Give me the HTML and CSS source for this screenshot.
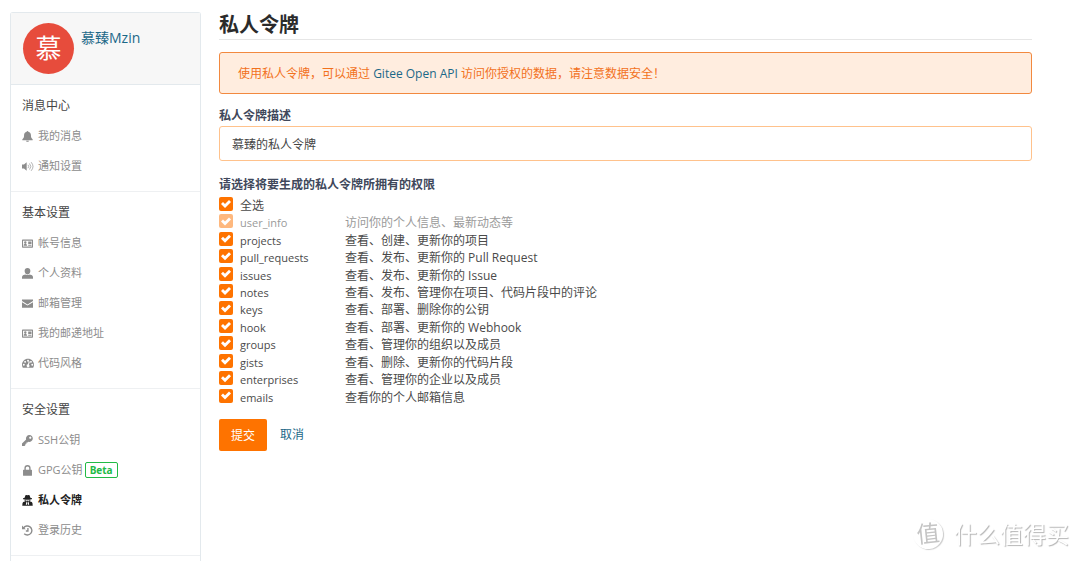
FILE: index.html
```html
<!DOCTYPE html>
<html lang="zh-CN">
<head>
<meta charset="utf-8">
<title>私人令牌</title>
<link rel="stylesheet" href="styles.css">
</head>
<body>
<div class="page">
  <aside class="sidebar">
    <header class="profile">
      <span class="avatar">慕</span>
      <a class="profile-name" href="#">慕臻Mzin</a>
    </header>
    <nav>
      <section class="group">
        <h2 class="group-title">消息中心</h2>
        <a class="item" href="#"><svg class="icon" viewBox="0 0 16 16"><path d="M8 0c.8 0 1.200.5 1.200 1.200C11.700 1.800 13 3.800 13 6.200c0 3 .8 4.600 2.500 5.800V13.300H.5V12C2.200 10.800 3 9.200 3 6.200 3 3.800 4.300 1.800 6.800 1.200 6.800.5 7.200 0 8 0zM6 14h4a2 1.800 0 0 1-4 0z"/></svg>我的消息</a>
        <a class="item" href="#"><svg class="icon icon-wide" viewBox="0 0 18 16"><path d="M0 5h3l4-3.500v13L3 11H0z"/><path class="line" d="M9 5.500q2.200 2.500 0 5M11.300 3.500q3.900 4.500 0 9M13.700 1.500q5.600 6.500 0 13"/></svg>通知设置</a>
      </section>
      <section class="group">
        <h2 class="group-title">基本设置</h2>
        <a class="item" href="#"><svg class="icon" viewBox="0 0 16 16"><path fill-rule="evenodd" d="M1 2h14q1 0 1 1v10q0 1-1 1H1q-1 0-1-1V3q0-1 1-1zM1.500 4v8.500h13V4zM4.800 4.700a1.800 1.800 0 1 1 0 3.600 1.800 1.800 0 0 1 0-3.600zM2.200 11.300q0-2.800 2.600-2.800t2.600 2.800zM9 5h4.800v3.700H9zM9 9.800h4.800v1.500H9z"/></svg>帐号信息</a>
        <a class="item" href="#"><svg class="icon" viewBox="0 0 16 16"><path d="M8 0c2.600 0 4.200 1.900 4.200 4.400S10.200 9.500 8 9.500 3.800 6.900 3.800 4.400 5.400 0 8 0zM4.800 9.300q3.200 1.900 6.400 0 4.500.7 4.800 3.400V15.500H0v-2.800Q.3 10 4.800 9.300z"/></svg>个人资料</a>
        <a class="item" href="#"><svg class="icon" viewBox="0 0 16 16"><path d="M0 2h16v2.300L8 9.300 0 4.300zM0 6l8 5 8-5v8H0z"/></svg>邮箱管理</a>
        <a class="item" href="#"><svg class="icon" viewBox="0 0 16 16"><path fill-rule="evenodd" d="M1 2h14q1 0 1 1v10q0 1-1 1H1q-1 0-1-1V3q0-1 1-1zM1.500 4v8.500h13V4zM4.800 4.700a1.800 1.800 0 1 1 0 3.600 1.800 1.800 0 0 1 0-3.600zM2.200 11.300q0-2.800 2.600-2.800t2.600 2.800zM9 5h4.800v3.700H9zM9 9.800h4.800v1.500H9z"/></svg>我的邮递地址</a>
        <a class="item" href="#"><svg class="icon icon-wide" viewBox="0 0 18 16"><path fill-rule="evenodd" d="M9 1c5 0 9 4 9 9 0 1.500-.4 3-1.200 4.500H1.200C.4 13 0 11.500 0 10c0-5 4-9 9-9zM9 2.500a1.300 1.300 0 1 0 .1 0zM4.600 4.300a1.300 1.300 0 1 0 .1 0zM2.700 8.500a1.300 1.300 0 1 0 .1 0zM13.400 4.300a1.300 1.300 0 1 0 .1 0zM15.300 8.500a1.300 1.300 0 1 0 .1 0zM10.300 4.800 8.900 9.300a2.200 2.200 0 1 0 1.500.4l1.300-4.500z"/></svg>代码风格</a>
      </section>
      <section class="group">
        <h2 class="group-title">安全设置</h2>
        <a class="item" href="#"><svg class="icon" viewBox="0 0 16 16"><path fill-rule="evenodd" d="M10.800 0a5 5 0 1 1-1.500 9.800L8 11H6.500v1.700H5v1.700L3.700 16H0v-3.500L6 6.500A5 5 0 0 1 10.800 0zM12 2.300a1.600 1.600 0 1 0 .1 0z"/></svg>SSH公钥</a>
        <a class="item" href="#"><svg class="icon" viewBox="0 0 16 16"><path fill-rule="evenodd" d="M2.300 7h1.200V4.500a4.500 4.500 0 0 1 9 0V7h1.200q.8 0 .8.800v7.200q0 .8-.8.800H2.300q-.8 0-.8-.8V7.800q0-.8.8-.8zM5.500 7h5V4.500a2.500 2.500 0 0 0-5 0z"/></svg>GPG公钥<span class="beta">Beta</span></a>
        <a class="item item-active" href="#" aria-current="page"><svg class="icon" viewBox="0 0 16 16"><path fill-rule="evenodd" d="M5 .3q1.500-.6 3 .2 1.500-.8 3-.2L12.200 4l2.300.8v1.200h-13V4.800L3.800 4zM3.500 6.700h9l-.8 2.600 2.600 1Q15.600 11.300 15.600 15.700H.4Q.4 11.300 1.700 10.300l2.600-1zM5 7.500 5.400 9.100h1.900l.4-.8h.6l.4.8h1.900l.4-1.600zM6.200 10.300 5.600 14.300H7.300L7.700 11zM9.800 10.300 8.300 11l.4 3.300h1.700z"/></svg>私人令牌</a>
        <a class="item" href="#"><svg class="icon" viewBox="0 0 16 16"><path d="M0 .8v5.500h5.500z"/><path class="line" d="M2.200 4.400A6.600 6.600 0 1 1 3.200 12.800M8.600 4.500v4.300H5.600"/></svg>登录历史</a>
      </section>
    </nav>
  </aside>

  <main class="content">
    <h1 class="title">私人令牌</h1>
    <p class="alert">使用私人令牌，可以通过 <a href="#">Gitee Open API</a> 访问你授权的数据，请注意数据安全！</p>
    <form>
      <label class="label" for="desc">私人令牌描述</label>
      <input class="text" id="desc" type="text" value="慕臻的私人令牌">
      <fieldset class="scopes">
        <legend class="label">请选择将要生成的私人令牌所拥有的权限</legend>
        <div class="scope-list">
          <label class="scope"><input type="checkbox" checked><span>全选</span></label>
          <label class="scope scope-off"><input type="checkbox" checked disabled><span class="scope-name">user_info</span><span>访问你的个人信息、最新动态等</span></label>
          <label class="scope"><input type="checkbox" checked><span class="scope-name">projects</span><span>查看、创建、更新你的项目</span></label>
          <label class="scope"><input type="checkbox" checked><span class="scope-name">pull_requests</span><span>查看、发布、更新你的 Pull Request</span></label>
          <label class="scope"><input type="checkbox" checked><span class="scope-name">issues</span><span>查看、发布、更新你的 Issue</span></label>
          <label class="scope"><input type="checkbox" checked><span class="scope-name">notes</span><span>查看、发布、管理你在项目、代码片段中的评论</span></label>
          <label class="scope"><input type="checkbox" checked><span class="scope-name">keys</span><span>查看、部署、删除你的公钥</span></label>
          <label class="scope"><input type="checkbox" checked><span class="scope-name">hook</span><span>查看、部署、更新你的 Webhook</span></label>
          <label class="scope"><input type="checkbox" checked><span class="scope-name">groups</span><span>查看、管理你的组织以及成员</span></label>
          <label class="scope"><input type="checkbox" checked><span class="scope-name">gists</span><span>查看、删除、更新你的代码片段</span></label>
          <label class="scope"><input type="checkbox" checked><span class="scope-name">enterprises</span><span>查看、管理你的企业以及成员</span></label>
          <label class="scope"><input type="checkbox" checked><span class="scope-name">emails</span><span>查看你的个人邮箱信息</span></label>
        </div>
      </fieldset>
      <div class="actions">
        <button class="submit" type="submit">提交</button>
        <a href="#">取消</a>
      </div>
    </form>
  </main>
</div>
<div class="watermark"><span class="seal">值</span><span>什么值得买</span></div>
</body>
</html>
```

FILE: styles.css
```css
* { box-sizing: border-box; }

html, body { height: 100%; }

body {
  margin: 0;
  overflow: hidden;
  background: #fff;
  color: #40485b;
  font: 12px/18px "Open Sans", "Noto Sans CJK SC", sans-serif;
}

a { color: #1b6888; text-decoration: none; }

.page {
  display: grid;
  grid-template-columns: 191px 1fr;
  column-gap: 18px;
  min-height: 100%;
  padding: 12px 48px 0 10px;
}

.sidebar {
  border: 1px solid #e3e9ed;
  border-bottom: 0;
  border-radius: 3px 3px 0 0;
}

.profile {
  display: flex;
  gap: 7px;
  height: 72px;
  padding: 10px 12px;
  border-bottom: 1px solid #e3e9ed;
  background: #f7f7f7;
}

.avatar {
  width: 51px;
  height: 51px;
  border-radius: 50%;
  background: #e74c3c;
  color: #fff;
  font-size: 26px;
  line-height: 51px;
  text-align: center;
}

.profile-name { font-size: 14px; line-height: 30px; }

.group {
  padding: 6px 0 10px 11px;
  border-bottom: 1px solid #eef0f2;
}

.group-title {
  margin: 0;
  color: #444;
  font-size: 12px;
  font-weight: 400;
  line-height: 30px;
}

.item {
  display: flex;
  align-items: center;
  height: 30px;
  color: #8c8c8c;
  font-size: 11px;
}

.item-active { color: #222; font-weight: 700; }

.icon {
  width: 11px;
  height: 11px;
  margin-right: 5px;
  fill: currentColor;
}

.icon-wide { width: 12px; margin-right: 4px; }

.line { fill: none; stroke: currentColor; stroke-width: 2; }

.icon-wide .line { stroke-width: 1; }

.beta {
  margin-left: 2px;
  padding: 0 4px;
  border: 1px solid #21ba45;
  border-radius: 2px;
  color: #21ba45;
  font-size: 10px;
  font-weight: 700;
  line-height: 14px;
}

.title {
  margin: 0 0 12px;
  padding-bottom: 1px;
  border-bottom: 1px solid #e6e6e6;
  color: #2b2b2b;
  font-size: 20px;
  line-height: 26px;
}

.alert {
  margin: 0 0 12px;
  padding: 12px 18px 10px;
  border: 1px solid #f2893f;
  border-radius: 3px;
  background: #ffeddf;
  color: #f2711c;
}

.label {
  display: block;
  padding: 0;
  color: #40485b;
  font-weight: 700;
  line-height: 20px;
}

.text {
  display: block;
  width: 100%;
  height: 35px;
  padding: 0 12px;
  border: 1px solid #ffc28c;
  border-radius: 3px;
  outline: 0;
  background: #fff;
  color: #444;
  font: inherit;
}

.scopes { margin: 14px 0 13px; padding: 0; border: 0; }

.scope-list {
  display: grid;
  grid-auto-rows: 1fr;
  min-height: 211px;
  padding-top: 2px;
}

.scope {
  display: grid;
  grid-template-columns: 14px 98px 1fr;
  column-gap: 7px;
  color: #4a4a4a;
  line-height: 17px;
}

.scope-name { font-size: 11px; }

.scope-off { color: #9a9a9a; }

.scope input {
  appearance: none;
  width: 14px;
  height: 14px;
  margin: 0;
  border-radius: 2px;
  background: #fe7300;
}

.scope input:checked::before {
  content: "";
  display: block;
  height: 14px;
  background: #fff;
  clip-path: polygon(2px 7px, 4px 5px, 6px 7px, 10px 3px, 12px 5px, 6px 11px);
}

.scope-off input { opacity: .5; }

.actions { display: flex; align-items: center; gap: 13px; }

.submit {
  height: 32px;
  padding: 1px 12px 0;
  border: 0;
  border-radius: 2px;
  background: #fe7300;
  color: #fff;
  font: inherit;
}

.watermark {
  position: fixed;
  right: 11px;
  bottom: 12px;
  display: flex;
  align-items: center;
  gap: 11px;
  color: #fff;
  font-size: 23px;
  line-height: 30px;
  text-shadow: 1px 1px 1px #b4b4b4;
}

.seal {
  width: 30px;
  height: 30px;
  border-radius: 50%;
  box-shadow: 1px 1px 1px #ccc;
  color: #c4c4c4;
  line-height: 28px;
  text-align: center;
  text-shadow: none;
  transform: rotate(-6deg);
}
```
